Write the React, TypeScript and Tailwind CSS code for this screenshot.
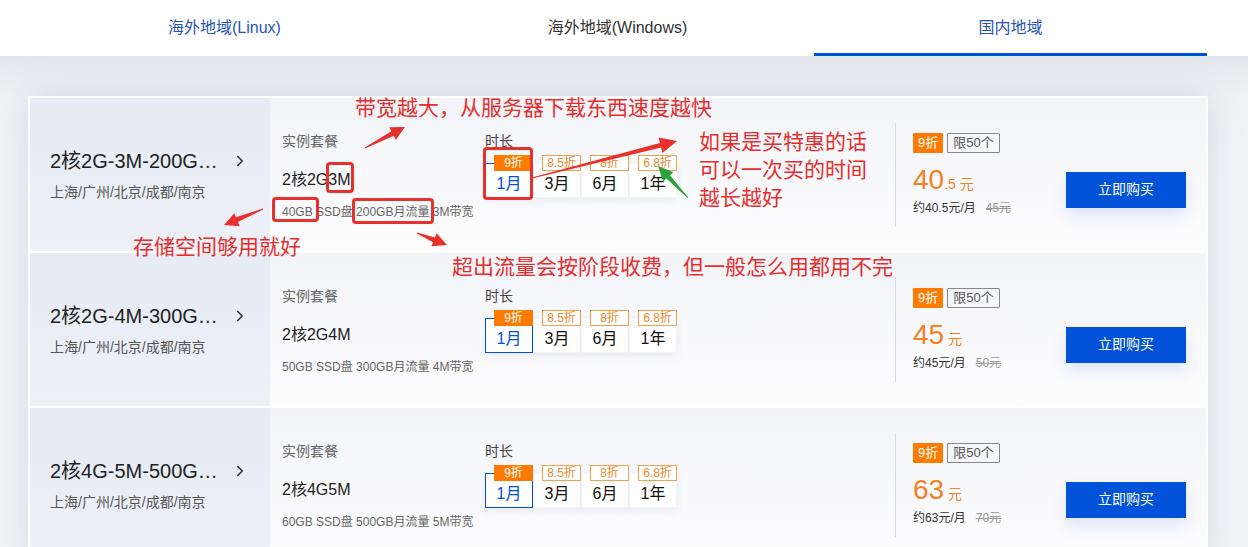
import { ChevronRight } from "lucide-react";

const plans = [
  { name: "2核2G-3M-200G…", spec: "2核2G3M", detail: "40GB SSD盘 200GB月流量 3M带宽", price: "40", dec: ".5", monthly: "40.5", orig: "45" },
  { name: "2核2G-4M-300G…", spec: "2核2G4M", detail: "50GB SSD盘 300GB月流量 4M带宽", price: "45", dec: "", monthly: "45", orig: "50" },
  { name: "2核4G-5M-500G…", spec: "2核4G5M", detail: "60GB SSD盘 500GB月流量 5M带宽", price: "63", dec: "", monthly: "63", orig: "70" },
];

const durations = [
  { label: "1月", off: "9折" },
  { label: "3月", off: "8.5折" },
  { label: "6月", off: "8折" },
  { label: "1年", off: "6.8折" },
];

const tabs = [
  { label: "海外地域(Linux)", tone: "text-[#1f55b5]" },
  { label: "海外地域(Windows)", tone: "text-[#333]" },
  { label: "国内地域", tone: "text-[#1f55b5]", active: true },
];

// tapered arrow like a screenshot annotation tool draws
function arrow(x1: number, y1: number, x2: number, y2: number, head = 14, wing = 7, shaft = 2.6) {
  const dx = x2 - x1;
  const dy = y2 - y1;
  const len = Math.hypot(dx, dy);
  const ux = dx / len;
  const uy = dy / len;
  const nx = -uy;
  const ny = ux;
  const bx = x2 - ux * head;
  const by = y2 - uy * head;
  const pts = [
    [x1 + nx * 0.5, y1 + ny * 0.5],
    [bx + nx * shaft, by + ny * shaft],
    [bx + nx * wing, by + ny * wing],
    [x2, y2],
    [bx - nx * wing, by - ny * wing],
    [bx - nx * shaft, by - ny * shaft],
    [x1 - nx * 0.5, y1 - ny * 0.5],
  ];
  return pts.map((p) => p.join(",")).join(" ");
}

function PlanRow({ plan }: { plan: (typeof plans)[number] }) {
  return (
    <div className="flex h-[153px]">
      {/* Left: plan name */}
      <div className="w-[240px] shrink-0 bg-gradient-to-b from-[#e6ebf4] to-[#edf0f6] px-[20px] flex flex-col justify-center">
        <div className="flex items-center justify-between h-[28px]">
          <span className="text-[20px] leading-[28px] text-[#222] whitespace-nowrap">{plan.name}</span>
          <ChevronRight size={18} strokeWidth={2.2} className="text-[#333] mr-[1px]" />
        </div>
        <div className="mt-[7px] text-[14px] leading-[20px] text-[#555]">上海/广州/北京/成都/南京</div>
      </div>

      {/* Right: details */}
      <div className="flex-1 flex bg-gradient-to-b from-[#f3f4f8] to-[#fdfdfe] pl-[12px] pr-[20px]">
        <div className="w-[203px] pt-[33px]">
          <div className="text-[14px] leading-[20px] text-[#666]">实例套餐</div>
          <div className="mt-[18px] text-[16px] leading-[22px] text-[#222]">{plan.spec}</div>
          <div className="mt-[13px] text-[12px] leading-[16px] text-[#666] whitespace-nowrap">{plan.detail}</div>
        </div>

        <div className="w-[410px] pt-[33px]">
          <div className="text-[14px] leading-[20px] text-[#444]">时长</div>
          <div className="mt-[12px] flex">
            {durations.map((d, i) => (
              <div
                key={d.label}
                className={`relative w-[48px] h-[35px] flex items-center justify-center pt-[6px] text-[16px] shadow-[0_3px_8px_rgba(40,60,100,0.08)] ${
                  i === 0 ? "bg-white border border-[#0052d9] text-[#0052d9]" : "bg-white text-[#111] border border-[#f3f4f7]"
                }`}
              >
                {d.label}
                <span
                  className={`absolute -top-[9px] left-[8px] w-[39px] h-[16px] flex items-center justify-center text-[12px] leading-none ${
                    i === 0 ? "bg-[#ff7a00] text-white" : "bg-white border border-[#f2a24e] text-[#e9892a]"
                  }`}
                >
                  {d.off}
                </span>
              </div>
            ))}
          </div>
        </div>

        <div className="flex-1 self-center h-[104px] border-l border-[#d6dbe4] pl-[17px] flex justify-between">
          <div className="pt-[10px]">
            <div className="flex gap-[4px]">
              <span className="h-[20px] px-[5px] flex items-center bg-[#ff7a00] text-white text-[13px] rounded-[1px]">9折</span>
              <span className="h-[20px] px-[5px] flex items-center border border-[#888] text-[#555] text-[13px] rounded-[1px]">限50个</span>
            </div>
            <div className="mt-[12px] h-[30px] leading-[30px] text-[#f5801e] whitespace-nowrap">
              <span className="text-[28px]">{plan.price}</span>
              <span className="text-[14px]">{plan.dec} 元</span>
            </div>
            <div className="mt-[5px] text-[12px] leading-[16px] text-[#333] whitespace-nowrap">
              约{plan.monthly}元/月
              <span className="ml-[10px] text-[#999] line-through">{plan.orig}元</span>
            </div>
          </div>
          <button className="mt-[49px] w-[120px] h-[36px] bg-[#0052d9] text-white text-[14px] shadow-[0_8px_16px_rgba(0,82,217,0.12)]">
            立即购买
          </button>
        </div>
      </div>
    </div>
  );
}

export default function App() {
  return (
    <div className="relative h-[547px] w-full overflow-hidden bg-[#f3f4f7] font-['Liberation_Sans','Noto_Sans_CJK_SC',sans-serif]">
      {/* Region tabs */}
      <div className="h-[56px] bg-white">
        <div className="ml-[28px] w-[1179px] h-full grid grid-cols-3">
          {tabs.map((t) => (
            <div
              key={t.label}
              className={`flex items-center justify-center text-[16px] ${t.tone} ${t.active ? "border-b-[3px] border-[#0052d9] pt-[3px]" : ""}`}
            >
              {t.label}
            </div>
          ))}
        </div>
      </div>

      <div className="bg-[linear-gradient(180deg,#e3e6ec_0px,#f0f1f4_40px,#f3f4f7_120px)] pt-[40px] pl-[28px]">
        <div className="w-[1180px] bg-white p-[2px] flex flex-col gap-[2px] shadow-[0_0_30px_rgba(170,182,210,0.45)]">
          {plans.map((p) => (
            <PlanRow key={p.spec} plan={p} />
          ))}
        </div>
      </div>

      {/* Annotations drawn on top of the screenshot */}
      <div className="pointer-events-none absolute inset-0 font-['Noto_Sans_CJK_SC',sans-serif] text-[21px] leading-[28px] text-[#e62e2e]">
        <div className="absolute left-[355px] top-[92px] whitespace-nowrap">带宽越大，从服务器下载东西速度越快</div>
        <div className="absolute left-[133px] top-[231px] whitespace-nowrap">存储空间够用就好</div>
        <div className="absolute left-[452px] top-[251px] whitespace-nowrap">超出流量会按阶段收费，但一般怎么用都用不完</div>
        <div className="absolute left-[699px] top-[126px] whitespace-nowrap">
          <div>如果是买特惠的话</div>
          <div>可以一次买的时间</div>
          <div>越长越好</div>
        </div>

        <div className="absolute left-[326px] top-[162px] w-[28px] h-[31px] border-[3px] border-[#e8302c] rounded-[4px]" />
        <div className="absolute left-[272px] top-[197px] w-[47px] h-[25px] border-[3px] border-[#e8302c] rounded-[4px]" />
        <div className="absolute left-[352px] top-[198px] w-[82px] h-[26px] border-[3px] border-[#e8302c] rounded-[4px]" />
        <div className="absolute left-[483px] top-[147px] w-[50px] h-[53px] border-[3px] border-[#e8302c] rounded-[4px]" />

        <svg className="absolute inset-0" width="1248" height="547" viewBox="0 0 1248 547">
          <polygon points={arrow(365, 148, 405, 127)} fill="#e8302c" />
          <polygon points={arrow(263, 209, 224, 225)} fill="#e8302c" />
          <polygon points={arrow(417, 233, 447, 245)} fill="#e8302c" />
          <polygon points={arrow(532, 178, 677, 141, 17, 8, 2.4)} fill="#e8302c" />
          <polygon points={arrow(688, 198, 658, 166, 15, 7, 2.4)} fill="#27a33a" />
        </svg>
      </div>
    </div>
  );
}
